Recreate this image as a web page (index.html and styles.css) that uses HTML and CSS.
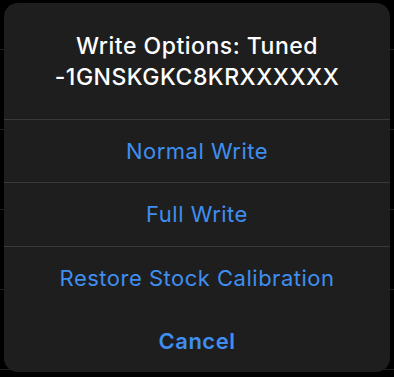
FILE: index.html
```html
<!DOCTYPE html>
<html lang="en">
<head>
<meta charset="utf-8">
<title>Write Options</title>
<link rel="stylesheet" href="styles.css">
</head>
<body>
<div class="sheet">
  <div class="sheet-header">
    <div class="sheet-title">Write Options: Tuned<br>-1GNSKGKC8KRXXXXXX</div>
  </div>
  <button class="sheet-action">Normal Write</button>
  <button class="sheet-action">Full Write</button>
  <button class="sheet-action">Restore Stock Calibration</button>
  <button class="sheet-action sheet-cancel">Cancel</button>
</div>
</body>
</html>
```
FILE: styles.css
```css
html, body {
  margin: 0;
  padding: 0;
}
body {
  width: 394px;
  height: 377px;
  overflow: hidden;
  background-color: #000;
  background-image: repeating-linear-gradient(to bottom, transparent 0, transparent 49px, #1f1f1f 49px, #1f1f1f 50px, transparent 50px, transparent 80px);
  font-family: Inter, "Noto Sans", "Liberation Sans", sans-serif;
  padding-top: 3px;
  box-sizing: border-box;
}
.sheet {
  margin: 0 4px;
  height: 369px;
  background: #1e1e1e;
  border-radius: 14px;
  display: flex;
  flex-direction: column;
  overflow: hidden;
}
.sheet-header {
  height: 116px;
  display: flex;
  align-items: center;
  justify-content: center;
  flex-shrink: 0;
}
.sheet-title {
  color: #fff;
  font-size: 23px;
  font-weight: 500;
  letter-spacing: 0.5px;
  line-height: 31px;
  text-align: center;
  padding-top: 1px;
}
.sheet-action {
  flex: 1;
  display: flex;
  align-items: center;
  justify-content: center;
  border: 0;
  border-top: 1px solid #3a3a3c;
  background: transparent;
  color: #3f8ef0;
  font-family: inherit;
  font-size: 22px;
  font-weight: 400;
  letter-spacing: 0.5px;
  padding: 0;
  margin: 0;
}
.sheet-cancel {
  border-top-color: transparent;
  font-weight: 600;
}
```
